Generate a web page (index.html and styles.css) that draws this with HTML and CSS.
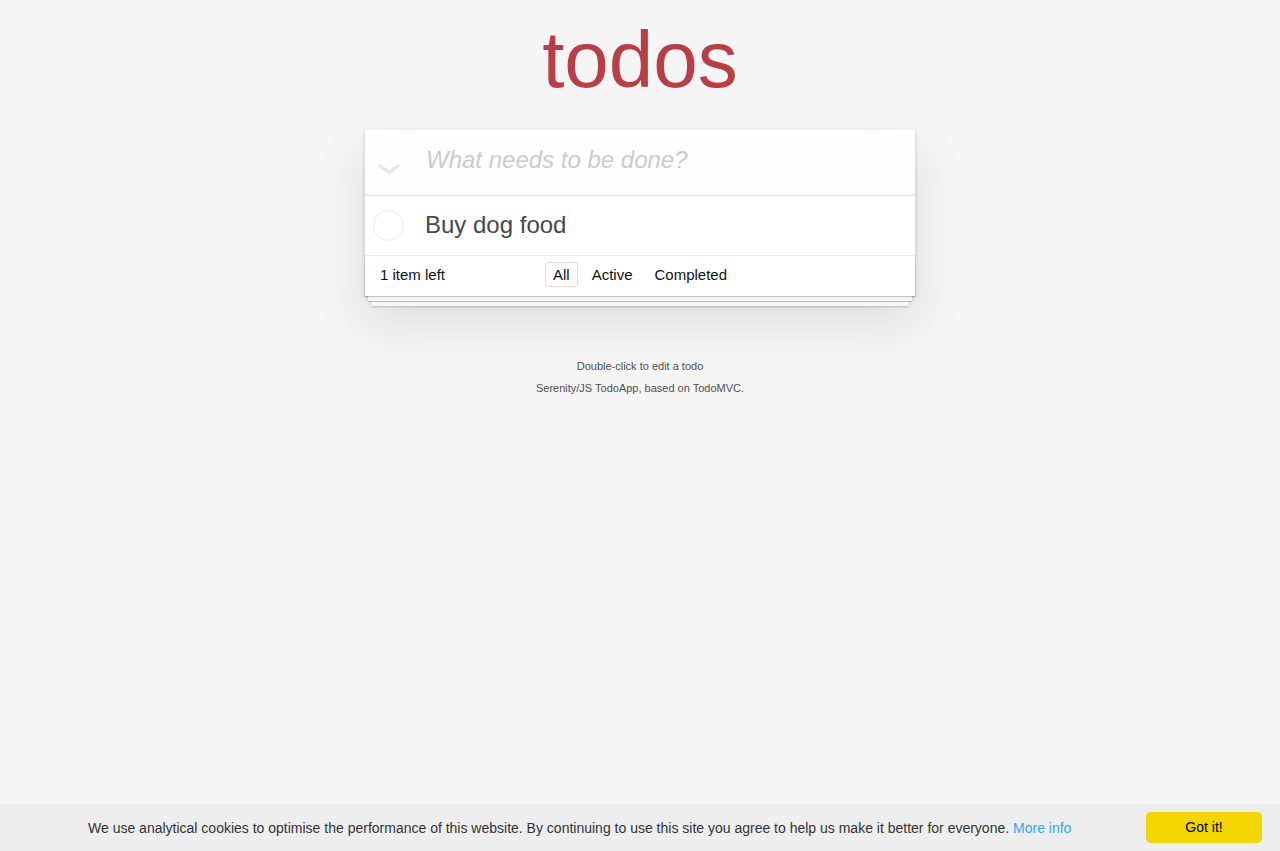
FILE: index.html
```html
<!DOCTYPE html>
<html lang="en">
<head>
<meta charset="utf-8">
<title>Serenity/JS TodoApp</title>
<link rel="stylesheet" href="styles.css">
</head>
<body>
<div class="page">
  <h1 class="title">todos</h1>
  <section class="todoapp">
    <div class="new-row">
      <span class="toggle-all" aria-hidden="true">
        <svg width="26" height="12" viewBox="0 0 26 12"><polyline points="3,2 13,9.5 23,2" fill="none" stroke="#e6e6e6" stroke-width="3.4" stroke-linejoin="miter"/></svg>
      </span>
      <input class="new-todo" placeholder="What needs to be done?">
    </div>
    <ul class="todo-list">
      <li class="todo-item"><span class="toggle"></span><label class="todo-label">Buy dog food</label></li>
    </ul>
    <footer class="footer">
      <span class="todo-count"><strong class="count-num">1</strong> item left</span>
      <ul class="filters">
        <li><a class="filter selected" href="#/">All</a></li>
        <li><a class="filter" href="#/active">Active</a></li>
        <li><a class="filter" href="#/completed">Completed</a></li>
      </ul>
      <span></span>
    </footer>
  </section>
  <footer class="info">
    <p>Double-click to edit a todo</p>
    <p>Serenity/JS TodoApp, based on TodoMVC.</p>
  </footer>
</div>
<div class="cookie-bar">
  <span class="cookie-msg">We use analytical cookies to optimise the performance of this website. By continuing to use this site you agree to help us make it better for everyone. <a class="cookie-link" href="#">More info</a></span>
  <a class="cookie-btn" href="#">Got it!</a>
</div>
</body>
</html>
```
FILE: styles.css
```css
html, body {
  margin: 0;
  padding: 0;
}
body {
  font: 14px "Liberation Sans", Arial, Helvetica, sans-serif;
  line-height: 1.4em;
  background: #f5f5f5;
  color: #111111;
  font-weight: 300;
}
.page {
  max-width: 550px;
  margin: 0 auto;
}
.title {
  margin: 4px 0 0;
  font-size: 80px;
  line-height: 112px;
  height: 112px;
  font-weight: 200;
  text-align: center;
  color: #b83f45;
}
.todoapp {
  background: #fff;
  margin: 14px 0 40px;
  box-shadow: 0 2px 4px 0 rgba(0,0,0,0.2), 0 25px 50px 0 rgba(0,0,0,0.1);
}
.new-row {
  display: flex;
  height: 65px;
  background: rgba(0,0,0,0.003);
  box-shadow: inset 0 -2px 1px rgba(0,0,0,0.03);
  border-bottom: 1px solid #e6e6e6;
}
.toggle-all {
  width: 60px;
  flex: none;
  padding: 33px 0 0 11px;
  box-sizing: border-box;
}
.toggle-all svg { display: block; }
.new-todo {
  flex: 1;
  min-width: 0;
  height: 65px;
  box-sizing: border-box;
  padding: 13px 16px 19px 1px;
  border: none;
  outline: none;
  background: transparent;
  font-family: inherit;
  font-size: 24px;
  line-height: 1.4em;
  color: #4d4d4d;
}
.new-todo::placeholder {
  font-style: italic;
  font-weight: 300;
  color: #cbcbcb;
}
.todo-list {
  margin: 0;
  padding: 0;
  list-style: none;
}
.todo-item {
  display: flex;
  align-items: center;
  border-bottom: 1px solid #ededed;
  font-size: 24px;
}
.toggle {
  flex: none;
  width: 31px;
  height: 31px;
  box-sizing: border-box;
  margin: 1px 21px 0 8px;
  border: 1px solid #ededed;
  border-radius: 50%;
}
.todo-label {
  padding: 15px 15px 15px 0;
  line-height: 1.2;
  font-weight: 400;
  color: #484848;
}
.footer {
  display: grid;
  grid-template-columns: 1fr auto 1fr;
  align-items: center;
  padding: 9px 15px 11px;
  height: 20px;
  font-size: 15px;
  color: #111;
  box-shadow: 0 1px 1px rgba(0,0,0,0.2),
              0 8px 0 -3px #f6f6f6,
              0 9px 1px -3px rgba(0,0,0,0.2),
              0 16px 0 -6px #f6f6f6,
              0 17px 2px -6px rgba(0,0,0,0.2);
}
.todo-count { text-align: left; }
.count-num { font-weight: 300; }
.filters {
  display: flex;
  margin: 0;
  padding: 0;
  list-style: none;
}
.filter {
  color: inherit;
  margin: 3px;
  padding: 3px 7px;
  text-decoration: none;
  border: 1px solid transparent;
  border-radius: 3px;
}
.filter.selected {
  border-color: rgba(175,47,47,0.2);
}
.info {
  margin: 65px auto 0;
  color: #4d4d4d;
  font-size: 11px;
  text-shadow: 0 1px 0 rgba(255,255,255,0.5);
  text-align: center;
}
.info p {
  line-height: 1;
  margin: 11px 0;
}
.info p:first-child { margin-top: 0; }
.cookie-bar {
  position: fixed;
  left: 0;
  right: 0;
  bottom: 0;
  display: flex;
  align-items: center;
  height: 47px;
  box-sizing: border-box;
  padding: 0 18px 0 88px;
  background: #eeeeee;
  color: #333;
  font-family: "Liberation Sans", Arial, sans-serif;
  font-size: 14px;
  font-weight: 400;
  line-height: 1.5;
}
.cookie-msg { flex: 1; padding-top: 1px; }
.cookie-link {
  color: #31a8f0;
  text-decoration: none;
}
.cookie-btn {
  flex: none;
  width: 116px;
  height: 31px;
  box-sizing: border-box;
  display: flex;
  align-items: center;
  justify-content: center;
  background: #f1d600;
  color: #000;
  border-radius: 5px;
  text-decoration: none;
  font-size: 14px;
}
```
